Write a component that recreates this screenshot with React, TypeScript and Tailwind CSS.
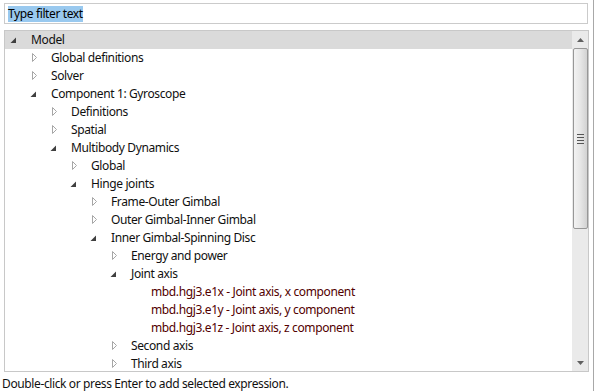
import React from 'react';

type Node = {
  label: string;
  level: number;
  state: 'open' | 'closed' | 'leaf';
  selected?: boolean;
};

const rows: Node[] = [
  { label: 'Model', level: 0, state: 'open', selected: true },
  { label: 'Global definitions', level: 1, state: 'closed' },
  { label: 'Solver', level: 1, state: 'closed' },
  { label: 'Component 1: Gyroscope', level: 1, state: 'open' },
  { label: 'Definitions', level: 2, state: 'closed' },
  { label: 'Spatial', level: 2, state: 'closed' },
  { label: 'Multibody Dynamics', level: 2, state: 'open' },
  { label: 'Global', level: 3, state: 'closed' },
  { label: 'Hinge joints', level: 3, state: 'open' },
  { label: 'Frame-Outer Gimbal', level: 4, state: 'closed' },
  { label: 'Outer Gimbal-Inner Gimbal', level: 4, state: 'closed' },
  { label: 'Inner Gimbal-Spinning Disc', level: 4, state: 'open' },
  { label: 'Energy and power', level: 5, state: 'closed' },
  { label: 'Joint axis', level: 5, state: 'open' },
  { label: 'mbd.hgj3.e1x - Joint axis, x component', level: 6, state: 'leaf' },
  { label: 'mbd.hgj3.e1y - Joint axis, y component', level: 6, state: 'leaf' },
  { label: 'mbd.hgj3.e1z - Joint axis, z component', level: 6, state: 'leaf' },
  { label: 'Second axis', level: 5, state: 'closed' },
  { label: 'Third axis', level: 5, state: 'closed' },
];

// tree expander glyphs, Windows 7 style
function Expander({ state }: { state: Node['state'] }) {
  if (state === 'open') {
    return (
      <svg width="7" height="7" viewBox="0 0 7 7" className="ml-[5px] mt-[1px]">
        <path d="M6 0.5 L6 6 L0.5 6 Z" fill="#3f3f3f" />
      </svg>
    );
  }
  if (state === 'closed') {
    return (
      <svg width="6" height="10" viewBox="0 0 6 10" className="ml-[7px]">
        <path d="M0.5 0.5 L4.5 4.5 L0.5 8.5 Z" fill="#fff" stroke="#a6a6a6" strokeWidth="1" />
      </svg>
    );
  }
  return null;
}

function Scrollbar() {
  return (
    <div className="w-[16px] h-full bg-[#eaeaea] flex flex-col items-center">
      <div className="h-[17px] w-full flex items-center justify-center">
        <svg width="7" height="4" viewBox="0 0 7 4">
          <path d="M3.5 0 L7 4 L0 4 Z" fill="#606060" />
        </svg>
      </div>
      <div className="w-[15px] h-[181px] rounded-[2px] border border-[#979797] bg-gradient-to-r from-[#f2f2f2] via-[#e6e6e6] to-[#d2d2d2] flex items-center justify-center">
        <div className="flex flex-col gap-[2px] w-[7px]">
          <div className="h-px bg-[#555]" />
          <div className="h-px bg-[#555]" />
          <div className="h-px bg-[#555]" />
          <div className="h-px bg-[#555]" />
        </div>
      </div>
      <div className="flex-1" />
      <div className="h-[17px] w-full flex items-center justify-center">
        <svg width="7" height="4" viewBox="0 0 7 4">
          <path d="M0 0 L7 0 L3.5 4 Z" fill="#606060" />
        </svg>
      </div>
    </div>
  );
}

export default function App() {
  return (
    <div
      className="w-[596px] h-[391px] bg-white flex overflow-hidden text-[12px] tracking-[-0.38px] text-black"
      style={{ fontFamily: '"Noto Sans", "Open Sans", sans-serif' }}
    >
      <div className="w-[593px] flex flex-col">
        <div className="pl-[4px] pt-[3px]">
          <div className="w-[584px] h-[21px] border border-[#cbcbcb] flex items-center pl-[3px]">
            <span className="bg-[#99c9ef] leading-[16px]">Type filter text</span>
          </div>
        </div>

        <div className="pl-[4px] pt-[6px]">
          <div className="w-[585px] h-[342px] border border-[#c8c8c8] flex">
            <div className="flex-1 overflow-hidden">
              {rows.map((row, i) => (
                <div
                  key={i}
                  className={`h-[18px] flex items-center ${row.selected ? 'bg-[#dadada]' : ''}`}
                  style={{ paddingLeft: row.level * 20 }}
                >
                  <div className="w-[26px] h-full flex items-center">
                    <Expander state={row.state} />
                  </div>
                  <span
                    className={`whitespace-nowrap leading-[18px] ${
                      row.state === 'leaf' ? 'text-[#520000]' : 'text-[#101010]'
                    }`}
                  >
                    {row.label}
                  </span>
                </div>
              ))}
            </div>
            <Scrollbar />
          </div>
        </div>

        <div className="pl-[2px] pt-[3px] leading-[18px] text-[#111]">
          Double-click or press Enter to add selected expression.
        </div>
      </div>
      <div className="w-px h-full bg-[#a8a8a8]" />
    </div>
  );
}
